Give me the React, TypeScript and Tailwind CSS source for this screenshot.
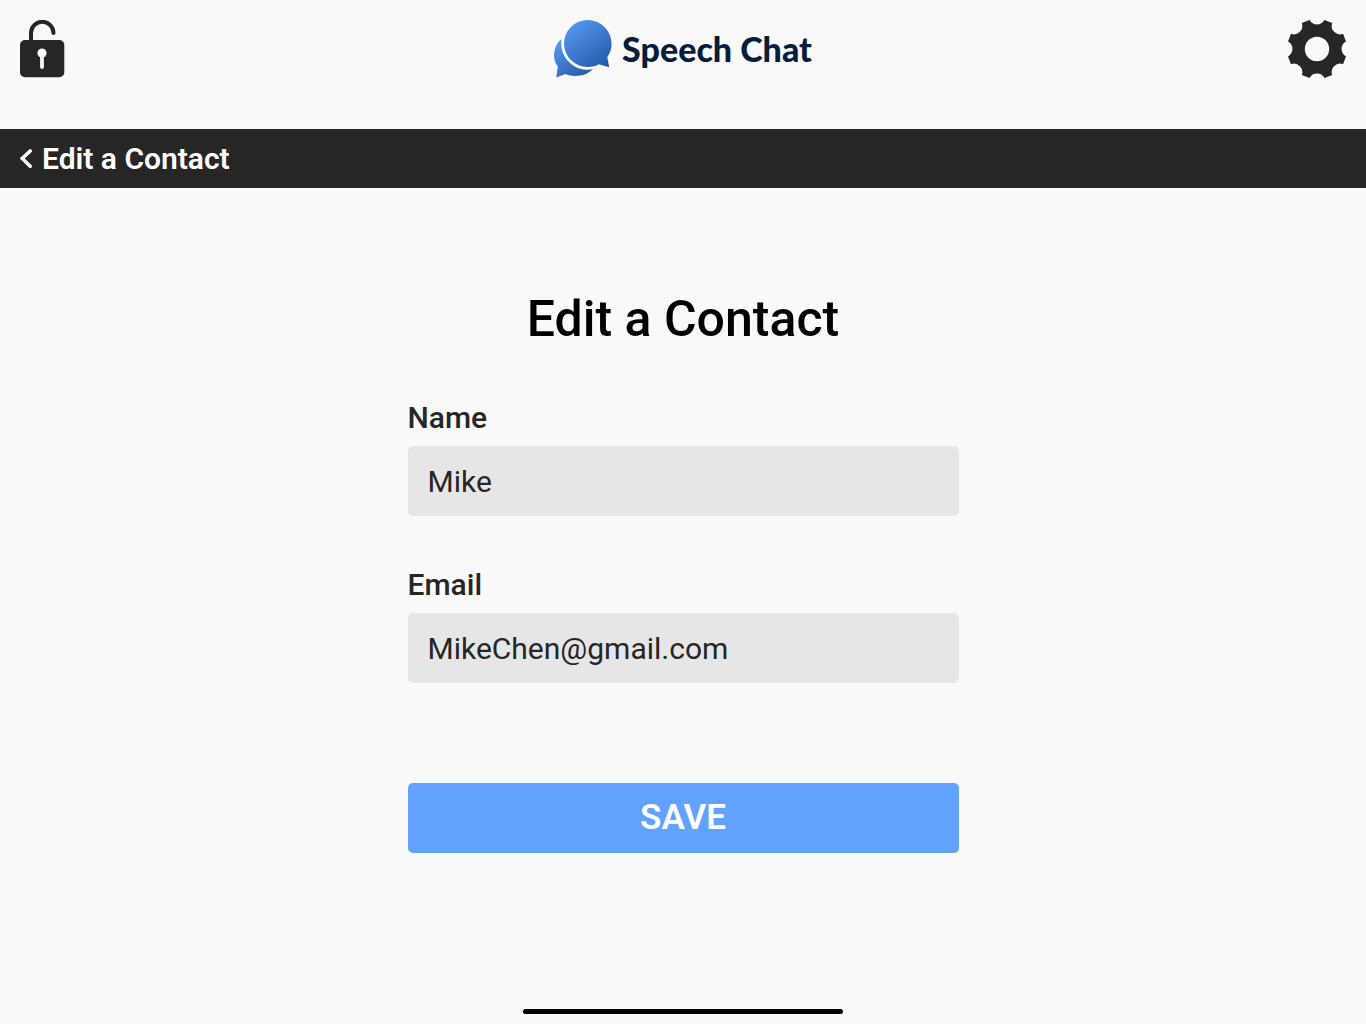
import { useState } from "react";

function UnlockIcon() {
  return (
    <svg width="45" height="58" viewBox="0 0 45 58" aria-hidden="true">
      <path d="M11 22V13a11 11 0 0 1 22.500 0" fill="none" stroke="#262626" strokeWidth="4" strokeLinecap="round" />
      <rect y="20" width="44.3" height="37.3" rx="5" fill="#262626" />
      <circle cx="22" cy="33" r="4.6" fill="#f9f9f9" />
      <path d="M22 34v13" stroke="#f9f9f9" strokeWidth="3.8" strokeLinecap="round" />
    </svg>
  );
}

function GearIcon() {
  return (
    <svg width="58" height="58" viewBox="-29 -29 58 58" aria-hidden="true">
      <path
        fill="#262626"
        fillRule="evenodd"
        d="M7.4-29L15.2-26A8.4 8.4 0 0 0 26-15.2L29-7.4A8.4 8.4 0 0 0 29 7.4L26 15.2A8.4 8.4 0 0 0 15.2 26L7.4 29A8.4 8.4 0 0 0-7.4 29L-15.2 26A8.4 8.4 0 0 0-26 15.2L-29 7.4A8.4 8.4 0 0 0-29-7.4L-26-15.2A8.4 8.4 0 0 0-15.2-26L-7.4-29A8.4 8.4 0 0 0 7.4-29ZM12.2 0A12.2 12.2 0 1 0-12.2 0A12.2 12.2 0 1 0 12.2 0Z"
      />
    </svg>
  );
}

function LogoMark() {
  return (
    <svg width="58" height="58" viewBox="0 0 58 58" aria-hidden="true">
      <defs>
        <linearGradient id="front" x1="0.15" y1="0.1" x2="0.85" y2="1">
          <stop offset="0" stopColor="#5596ed" />
          <stop offset="1" stopColor="#2359a8" />
        </linearGradient>
        <linearGradient id="back" x1="0.1" y1="0.1" x2="0.8" y2="1">
          <stop offset="0" stopColor="#5596ed" />
          <stop offset="1" stopColor="#2359a8" />
        </linearGradient>
      </defs>
      <path
        fill="url(#back)"
        d="M7.4 19.3C3 22.5 0 29 0 35.5C0 40 1.5 43.5 3.8 46.5L2.3 57.5L11.5 54C18 57 31 57.5 38.6 49.3A26.6 26.6 0 0 1 7.4 19.3Z"
      />
      <path
        fill="url(#front)"
        d="M33.5 0A24.1 24.1 0 0 1 57.6 24C57.6 29 56 33 53.3 37.3L55.2 47.2L44.8 44.3C42 46 38 47 33.5 47A23.5 23.5 0 0 1 33.5 0Z"
      />
    </svg>
  );
}

type FieldProps = {
  id: string;
  label: string;
  type: string;
  value: string;
  onChange: (value: string) => void;
};

function Field({ id, label, type, value, onChange }: FieldProps) {
  return (
    <div className="flex flex-col gap-2.5">
      <label htmlFor={id} className="text-[30px] leading-9 font-medium">
        {label}
      </label>
      <input
        id={id}
        type={type}
        value={value}
        onChange={(e) => onChange(e.target.value)}
        className="h-[70px] w-full rounded-[5px] bg-[#e6e6e6] px-5 text-[30px]"
      />
    </div>
  );
}

export default function App() {
  const [name, setName] = useState("Mike");
  const [email, setEmail] = useState("MikeChen@gmail.com");

  return (
    <div className="flex min-h-screen flex-col bg-[#f9f9f9] font-[Roboto,sans-serif] text-[#262626]">
      <header className="grid h-[129px] grid-cols-[1fr_auto_1fr] items-start px-5 pt-5">
        <button type="button" aria-label="Unlock" className="justify-self-start">
          <UnlockIcon />
        </button>
        <div className="flex items-center gap-2.5">
          <LogoMark />
          <span className="font-[Lato,sans-serif] text-[34px] leading-14 font-black text-[#071d3b]">Speech Chat</span>
        </div>
        <button type="button" aria-label="Settings" className="justify-self-end">
          <GearIcon />
        </button>
      </header>

      <nav className="flex h-[59px] items-center bg-[#262626] px-5 text-white">
        <a href="#contacts" className="flex items-center gap-2 text-[30px] leading-9 font-semibold">
          <svg width="14" height="20" viewBox="0 0 14 20" aria-hidden="true">
            <path d="M10.2 2L2.2 9.5L10.2 17.3" fill="none" stroke="white" strokeWidth="3.6" strokeLinecap="round" />
          </svg>
          Edit a Contact
        </a>
      </nav>

      <main className="mx-auto w-full max-w-[551px] flex-1 pt-[101px]">
        <h1 className="text-center text-[50px] leading-[60px] font-medium text-black">Edit a Contact</h1>
        <form className="mt-[51px]" onSubmit={(e) => e.preventDefault()}>
          <div className="flex flex-col gap-[51px]">
            <Field id="name" label="Name" type="text" value={name} onChange={setName} />
            <Field id="email" label="Email" type="email" value={email} onChange={setEmail} />
          </div>
          <button type="submit" className="mt-[100px] h-[70px] w-full rounded-[5px] bg-[#62a2ff] text-[35px] leading-10 font-semibold text-white">
            SAVE
          </button>
        </form>
      </main>

      <div className="mx-auto mb-2.5 h-[5px] w-80 rounded-full bg-black" />
    </div>
  );
}
